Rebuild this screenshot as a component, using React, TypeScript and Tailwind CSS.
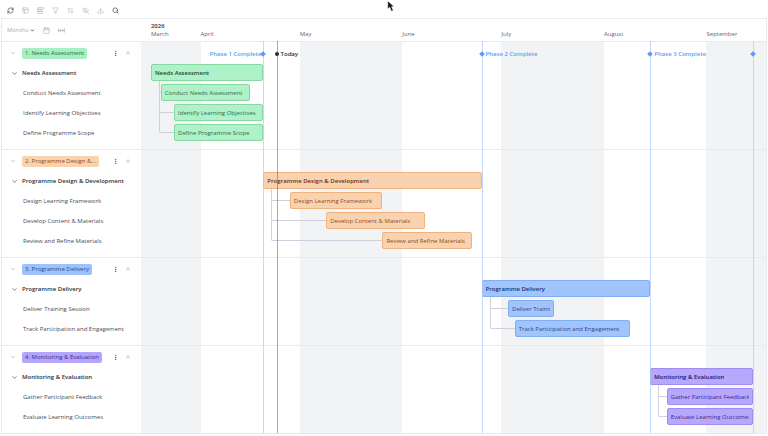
import React from "react";
import {
  Calendar,
  ChevronDown,
  Download,
  EyeOff,
  Filter,
  MoreVertical,
  PanelsTopLeft,
  Plus,
  RefreshCw,
  Search,
} from "lucide-react";

type Tone = "green" | "orange" | "blue" | "purple";

interface Task {
  name: string;
  start: number;
  end: number;
}

interface Phase {
  label: string;
  tone: Tone;
  summary: Task;
  tasks: Task[];
}

interface Milestone {
  day: number;
  label?: string;
  side?: "left" | "right";
}

// All dates are day numbers counted from 14 March 2026
const VIEW_DAYS = 189;

const MONTHS = [
  { name: "March", start: 3, bandStart: 0, end: 18 },
  { name: "April", start: 18, bandStart: 18, end: 48 },
  { name: "May", start: 48, bandStart: 48, end: 79 },
  { name: "June", start: 79, bandStart: 79, end: 109 },
  { name: "July", start: 109, bandStart: 109, end: 140 },
  { name: "August", start: 140, bandStart: 140, end: 171 },
  { name: "September", start: 171, bandStart: 171, end: VIEW_DAYS },
];

const PHASES: Phase[] = [
  {
    label: "1. Needs Assessment",
    tone: "green",
    summary: { name: "Needs Assessment", start: 3, end: 37 },
    tasks: [
      { name: "Conduct Needs Assessment", start: 6, end: 33 },
      { name: "Identify Learning Objectives", start: 10, end: 37 },
      { name: "Define Programme Scope", start: 10, end: 37 },
    ],
  },
  {
    label: "2. Programme Design &...",
    tone: "orange",
    summary: { name: "Programme Design & Development", start: 37, end: 103 },
    tasks: [
      { name: "Design Learning Framework", start: 45, end: 73 },
      { name: "Develop Content & Materials", start: 56, end: 86 },
      { name: "Review and Refine Materials", start: 73, end: 100 },
    ],
  },
  {
    label: "3. Programme Delivery",
    tone: "blue",
    summary: { name: "Programme Delivery", start: 103, end: 154 },
    tasks: [
      { name: "Deliver Training Session", start: 111, end: 125 },
      { name: "Track Participation and Engagement", start: 113, end: 148 },
    ],
  },
  {
    label: "4. Monitoring & Evaluation",
    tone: "purple",
    summary: { name: "Monitoring & Evaluation", start: 154, end: 185 },
    tasks: [
      { name: "Gather Participant Feedback", start: 159, end: 185 },
      { name: "Evaluate Learning Outcomes", start: 159, end: 185 },
    ],
  },
];

const MILESTONES: Milestone[] = [
  { day: 37, label: "Phase 1 Complete", side: "left" },
  { day: 103, label: "Phase 2 Complete", side: "right" },
  { day: 154, label: "Phase 3 Complete", side: "right" },
  { day: 185 },
];

const TODAY = 41;

const BADGE: Record<Tone, string> = {
  green: "bg-[#a6efc2] text-[#2c6e49]",
  orange: "bg-[#f9d2ae] text-[#8f4a22]",
  blue: "bg-[#9dc2fb] text-[#27498f]",
  purple: "bg-[#b3a5fc] text-[#42278c]",
};

const BAR: Record<Tone, string> = {
  green: "bg-[#aff1c8] border-[#86d9a0] text-[#2c6e49]",
  orange: "bg-[#f9d3b0] border-[#f0b27e] text-[#8f4a22]",
  blue: "bg-[#a1c4fd] border-[#81adf2] text-[#27498f]",
  purple: "bg-[#b5a8fd] border-[#a08df2] text-[#42278c]",
};

const SUMMARY_TEXT: Record<Tone, string> = {
  green: "text-[#174a2c]",
  orange: "text-[#6b2f10]",
  blue: "text-[#16306e]",
  purple: "text-[#2b1266]",
};

const pct = (days: number) => `${(days / VIEW_DAYS) * 100}%`;

function GroupIcon({ className }: { className?: string }) {
  return (
    <svg viewBox="0 0 24 24" fill="none" stroke="currentColor" strokeWidth={2} className={className}>
      <rect x="2" y="2" width="20" height="6" rx="1.5" />
      <rect x="2" y="8" width="14" height="7" rx="1.5" />
      <rect x="2" y="15" width="17" height="7" rx="1.5" />
    </svg>
  );
}

function SortIcon({ className }: { className?: string }) {
  return (
    <svg viewBox="0 0 24 24" fill="none" stroke="currentColor" strokeWidth={2} className={className}>
      <path d="M7 21V3M2 8l5-5 5 5M17 3v18M12 16l5 5 5-5" />
    </svg>
  );
}

function FitIcon({ className }: { className?: string }) {
  return (
    <svg viewBox="0 0 24 24" fill="none" stroke="currentColor" strokeWidth={2.5} className={className}>
      <path d="M2 5v14M22 5v14M4 12h16M9 8l-4 4 4 4M15 8l4 4-4 4" />
    </svg>
  );
}

const TOOLS = [
  { name: "Refresh", icon: RefreshCw, active: true },
  { name: "Layout", icon: PanelsTopLeft },
  { name: "Group", icon: GroupIcon },
  { name: "Filter", icon: Filter },
  { name: "Sort", icon: SortIcon },
  { name: "Hide", icon: EyeOff },
  { name: "Export", icon: Download },
  { name: "Search", icon: Search, active: true },
];

function Bar({ task, tone, summary }: { task: Task; tone: Tone; summary?: boolean }) {
  return (
    <div
      className={`absolute top-px h-[17px] rounded-[2px] border px-[3px] flex items-center ${BAR[tone]}`}
      style={{ left: pct(task.start), width: pct(task.end - task.start) }}
    >
      <span
        className={`overflow-hidden whitespace-nowrap ${summary ? `font-semibold ${SUMMARY_TEXT[tone]}` : ""}`}
      >
        {task.name}
      </span>
    </div>
  );
}

function PhaseSection({ phase }: { phase: Phase }) {
  return (
    <section className="grid grid-cols-[139px_1fr] border-t border-[#e9eaed] pt-px pb-[6px]">
      {/* Names */}
      <div className="whitespace-nowrap">
        <div className="flex h-5 items-center pl-2">
          <button aria-label="Collapse phase" className="text-[#8d909b]">
            <ChevronDown className="size-[6px]" />
          </button>
          <span className={`ml-[6px] rounded-[2px] px-[3px] leading-[11px] ${BADGE[phase.tone]}`}>
            {phase.label}
          </span>
          <button aria-label="Phase options" className="ml-auto text-[#4b4e5a]">
            <MoreVertical className="size-[7px]" />
          </button>
          <button aria-label="Add task" className="ml-[6px] mr-[10px] text-[#a3a6b0]">
            <Plus className="size-[6px]" />
          </button>
        </div>
        <div className="flex h-5 items-center pl-[9px] font-semibold text-[#2d2f38]">
          <button aria-label="Collapse tasks">
            <ChevronDown className="size-[7px]" />
          </button>
          <span className="ml-1">{phase.summary.name}</span>
        </div>
        {phase.tasks.map((task) => (
          <div key={task.name} className="flex h-5 items-center pl-[21px]">
            {task.name}
          </div>
        ))}
      </div>

      {/* Bars */}
      <div className="pt-5">
        <div className="relative z-10 h-5">
          <Bar task={phase.summary} tone={phase.tone} summary />
        </div>
        {phase.tasks.map((task) => (
          <div key={task.name} className="relative h-5">
            <div
              className="absolute -top-[10px] h-5 ml-2 rounded-bl-[2px] border-b border-l border-[#cfd0dd]"
              style={{
                left: pct(phase.summary.start),
                width: `calc(${pct(task.start - phase.summary.start)} - 8px)`,
              }}
            />
            <Bar task={task} tone={phase.tone} />
          </div>
        ))}
      </div>
    </section>
  );
}

export default function App() {
  return (
    <div className="relative bg-white font-['Open_Sans','Noto_Sans',sans-serif] text-[6px] leading-[10px] text-[#4a4c56]">
      {/* Toolbar */}
      <div className="flex h-[18px] items-center gap-2 pt-[2px] pl-[7px]">
        {TOOLS.map(({ name, icon: Icon, active }) => (
          <button key={name} aria-label={name} className={active ? "text-[#2d2f38]" : "text-[#b0b2bf]"}>
            <Icon className="size-[7px]" />
          </button>
        ))}
      </div>

      <main className="mx-px border border-[#e9eaed]">
        {/* Timeline header */}
        <div className="grid h-[22px] grid-cols-[139px_1fr]">
          <div className="flex items-center gap-2 pl-[5px] text-[#a9acb8]">
            <button className="flex items-center gap-[2px]">
              Months
              <ChevronDown className="size-[5px] text-[#4b4e5a]" strokeWidth={4} />
            </button>
            <button aria-label="Go to date">
              <Calendar className="size-[7px]" />
            </button>
            <button aria-label="Fit to screen">
              <FitIcon className="size-[7px]" />
            </button>
          </div>
          <div className="relative text-[#62656f]">
            {MONTHS.map((month, i) => (
              <div
                key={month.name}
                className="absolute bottom-[3px] leading-[8px]"
                style={{ left: pct(month.start) }}
              >
                {i === 0 && <div className="font-semibold text-[#2d2f38]">2026</div>}
                {month.name}
              </div>
            ))}
          </div>
        </div>

        <div className="relative">
          {/* Month bands */}
          <div className="absolute inset-y-0 right-0 left-[139px]">
            {MONTHS.map(
              (month, i) =>
                i % 2 === 0 && (
                  <div
                    key={month.name}
                    className="absolute inset-y-0 bg-[#f2f3f5]"
                    style={{ left: pct(month.bandStart), width: pct(month.end - month.bandStart) }}
                  />
                )
            )}
          </div>

          <div className="relative">
            {PHASES.map((phase) => (
              <PhaseSection key={phase.label} phase={phase} />
            ))}
          </div>

          {/* Milestones and today */}
          <div className="pointer-events-none absolute inset-y-0 right-0 left-[139px] z-20 font-semibold">
            {MILESTONES.map((m) => (
              <div
                key={m.day}
                className="absolute inset-y-0 border-l border-[#a9cbfb]/70 text-[#639cf3]"
                style={{ left: pct(m.day) }}
              >
                <div className="absolute top-[11px] -left-[3px] size-1 rotate-45 bg-[#5b9af8]" />
                {m.label && (
                  <span
                    className={`absolute top-2 whitespace-nowrap ${m.side === "left" ? "right-[3px]" : "left-[3px]"}`}
                  >
                    {m.label}
                  </span>
                )}
              </div>
            ))}
            <div
              className="absolute inset-y-0 border-l border-[#6d6f78]/60 text-[#2d2f38]"
              style={{ left: pct(TODAY) }}
            >
              <div className="absolute top-[11px] -left-[3px] size-1 rounded-full bg-[#2d2f38]" />
              <span className="absolute top-2 left-[3px]">Today</span>
            </div>
          </div>
        </div>
      </main>

      {/* Pointer */}
      <svg viewBox="0 0 12 18" className="pointer-events-none absolute top-0 left-[387px] h-3 w-2">
        <path d="M1 1v13l3-3 2.500 6 3-1.200-2.500-5.800h4z" fill="#16161c" stroke="#fff" strokeWidth="1" />
      </svg>
    </div>
  );
}
